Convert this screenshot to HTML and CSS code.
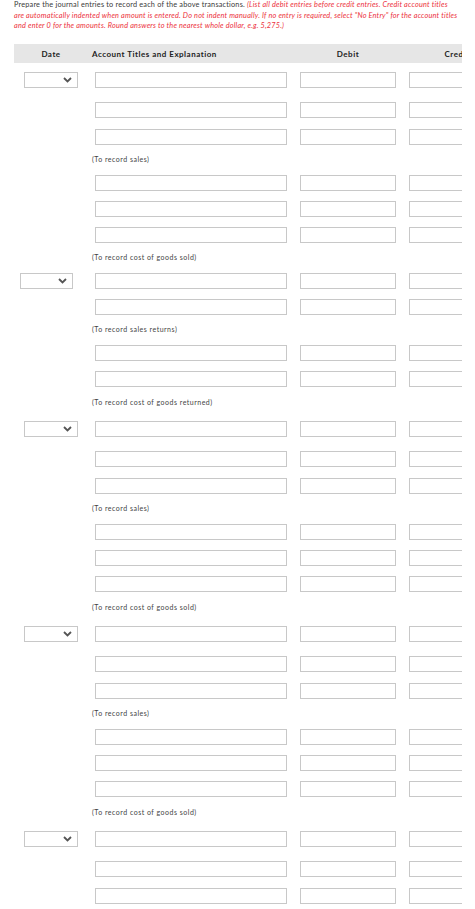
FILE: index.html
```html
<!DOCTYPE html>
<html>
<head>
<meta charset="utf-8">
<link rel="stylesheet" href="styles.css">
</head>
<body>
<div class="page">
  <p class="intro">Prepare the journal entries to record each of the above transactions. <em>(List all debit entries before credit entries. Credit account titles<br>are automatically indented when amount is entered. Do not indent manually. If no entry is required, select "No Entry" for the account titles<br>and enter 0 for the amounts. Round answers to the nearest whole dollar, e.g. 5,275.)</em></p>

  <div class="table">
    <div class="head">
      <div class="c-date">Date</div>
      <div class="c-acct">Account Titles and Explanation</div>
      <div class="c-num">Debit</div>
      <div class="c-num">Credit</div>
    </div>

    <!-- group 1 -->
    <div class="row first">
      <div class="c-date"><div class="dd"><svg width="9" height="6" viewBox="0 0 9 6"><polyline points="1,1 4.5,4.5 8,1" fill="none" stroke="#555" stroke-width="1.8"/></svg></div></div>
      <div class="c-acct"><input class="box" type="text"></div>
      <div class="c-num"><input class="box" type="text"></div>
      <div class="c-num"><input class="box" type="text"></div>
    </div>
    <div class="row after-dd">
      <div class="c-date"></div>
      <div class="c-acct"><input class="box" type="text"></div>
      <div class="c-num"><input class="box" type="text"></div>
      <div class="c-num"><input class="box" type="text"></div>
    </div>
    <div class="row third">
      <div class="c-date"></div>
      <div class="c-acct"><input class="box" type="text"></div>
      <div class="c-num"><input class="box" type="text"></div>
      <div class="c-num"><input class="box" type="text"></div>
    </div>
    <div class="note">(To record sales)</div>
    <div class="row plain">
      <div class="c-date"></div>
      <div class="c-acct"><input class="box" type="text"></div>
      <div class="c-num"><input class="box" type="text"></div>
      <div class="c-num"><input class="box" type="text"></div>
    </div>
    <div class="row">
      <div class="c-date"></div>
      <div class="c-acct"><input class="box" type="text"></div>
      <div class="c-num"><input class="box" type="text"></div>
      <div class="c-num"><input class="box" type="text"></div>
    </div>
    <div class="row">
      <div class="c-date"></div>
      <div class="c-acct"><input class="box" type="text"></div>
      <div class="c-num"><input class="box" type="text"></div>
      <div class="c-num"><input class="box" type="text"></div>
    </div>
    <div class="note">(To record cost of goods sold)</div>

    <!-- group 2 -->
    <div class="row plain">
      <div class="c-date"><div class="dd shift"><svg width="9" height="6" viewBox="0 0 9 6"><polyline points="1,1 4.5,4.5 8,1" fill="none" stroke="#555" stroke-width="1.8"/></svg></div></div>
      <div class="c-acct"><input class="box" type="text"></div>
      <div class="c-num"><input class="box" type="text"></div>
      <div class="c-num"><input class="box" type="text"></div>
    </div>
    <div class="row">
      <div class="c-date"></div>
      <div class="c-acct"><input class="box" type="text"></div>
      <div class="c-num"><input class="box" type="text"></div>
      <div class="c-num"><input class="box" type="text"></div>
    </div>
    <div class="note">(To record sales returns)</div>
    <div class="row plain">
      <div class="c-date"></div>
      <div class="c-acct"><input class="box" type="text"></div>
      <div class="c-num"><input class="box" type="text"></div>
      <div class="c-num"><input class="box" type="text"></div>
    </div>
    <div class="row">
      <div class="c-date"></div>
      <div class="c-acct"><input class="box" type="text"></div>
      <div class="c-num"><input class="box" type="text"></div>
      <div class="c-num"><input class="box" type="text"></div>
    </div>
    <div class="note tall">(To record cost of goods returned)</div>

    <!-- group 3 -->
    <div class="row plain">
      <div class="c-date"><div class="dd"><svg width="9" height="6" viewBox="0 0 9 6"><polyline points="1,1 4.5,4.5 8,1" fill="none" stroke="#555" stroke-width="1.8"/></svg></div></div>
      <div class="c-acct"><input class="box" type="text"></div>
      <div class="c-num"><input class="box" type="text"></div>
      <div class="c-num"><input class="box" type="text"></div>
    </div>
    <div class="row after-dd">
      <div class="c-date"></div>
      <div class="c-acct"><input class="box" type="text"></div>
      <div class="c-num"><input class="box" type="text"></div>
      <div class="c-num"><input class="box" type="text"></div>
    </div>
    <div class="row third">
      <div class="c-date"></div>
      <div class="c-acct"><input class="box" type="text"></div>
      <div class="c-num"><input class="box" type="text"></div>
      <div class="c-num"><input class="box" type="text"></div>
    </div>
    <div class="note">(To record sales)</div>
    <div class="row plain">
      <div class="c-date"></div>
      <div class="c-acct"><input class="box" type="text"></div>
      <div class="c-num"><input class="box" type="text"></div>
      <div class="c-num"><input class="box" type="text"></div>
    </div>
    <div class="row">
      <div class="c-date"></div>
      <div class="c-acct"><input class="box" type="text"></div>
      <div class="c-num"><input class="box" type="text"></div>
      <div class="c-num"><input class="box" type="text"></div>
    </div>
    <div class="row">
      <div class="c-date"></div>
      <div class="c-acct"><input class="box" type="text"></div>
      <div class="c-num"><input class="box" type="text"></div>
      <div class="c-num"><input class="box" type="text"></div>
    </div>
    <div class="note tall">(To record cost of goods sold)</div>

    <!-- group 4 -->
    <div class="row plain">
      <div class="c-date"><div class="dd"><svg width="9" height="6" viewBox="0 0 9 6"><polyline points="1,1 4.5,4.5 8,1" fill="none" stroke="#555" stroke-width="1.8"/></svg></div></div>
      <div class="c-acct"><input class="box" type="text"></div>
      <div class="c-num"><input class="box" type="text"></div>
      <div class="c-num"><input class="box" type="text"></div>
    </div>
    <div class="row after-dd">
      <div class="c-date"></div>
      <div class="c-acct"><input class="box" type="text"></div>
      <div class="c-num"><input class="box" type="text"></div>
      <div class="c-num"><input class="box" type="text"></div>
    </div>
    <div class="row third">
      <div class="c-date"></div>
      <div class="c-acct"><input class="box" type="text"></div>
      <div class="c-num"><input class="box" type="text"></div>
      <div class="c-num"><input class="box" type="text"></div>
    </div>
    <div class="note">(To record sales)</div>
    <div class="row plain">
      <div class="c-date"></div>
      <div class="c-acct"><input class="box" type="text"></div>
      <div class="c-num"><input class="box" type="text"></div>
      <div class="c-num"><input class="box" type="text"></div>
    </div>
    <div class="row">
      <div class="c-date"></div>
      <div class="c-acct"><input class="box" type="text"></div>
      <div class="c-num"><input class="box" type="text"></div>
      <div class="c-num"><input class="box" type="text"></div>
    </div>
    <div class="row">
      <div class="c-date"></div>
      <div class="c-acct"><input class="box" type="text"></div>
      <div class="c-num"><input class="box" type="text"></div>
      <div class="c-num"><input class="box" type="text"></div>
    </div>
    <div class="note tall">(To record cost of goods sold)</div>

    <!-- group 5 -->
    <div class="row plain">
      <div class="c-date"><div class="dd"><svg width="9" height="6" viewBox="0 0 9 6"><polyline points="1,1 4.5,4.5 8,1" fill="none" stroke="#555" stroke-width="1.8"/></svg></div></div>
      <div class="c-acct"><input class="box" type="text"></div>
      <div class="c-num"><input class="box" type="text"></div>
      <div class="c-num"><input class="box" type="text"></div>
    </div>
    <div class="row after-dd">
      <div class="c-date"></div>
      <div class="c-acct"><input class="box" type="text"></div>
      <div class="c-num"><input class="box" type="text"></div>
      <div class="c-num"><input class="box" type="text"></div>
    </div>
    <div class="row third">
      <div class="c-date"></div>
      <div class="c-acct"><input class="box" type="text"></div>
      <div class="c-num"><input class="box" type="text"></div>
      <div class="c-num"><input class="box" type="text"></div>
    </div>
  </div>
</div>
</body>
</html>
```

FILE: styles.css
```css
* { box-sizing: border-box; }

html, body {
  margin: 0;
  padding: 0;
  background: #ffffff;
}

.page {
  padding: 0 0 0 14px;
  font-family: Lato, "Open Sans", "Liberation Sans", sans-serif;
  color: #333333;
}

.intro {
  margin: 0;
  font-size: 7.3px;
  letter-spacing: 0.2px;
  line-height: 10.7px;
  white-space: nowrap;
  color: #3a3a3a;
}

.intro em {
  color: #ec2f3b;
  font-style: italic;
}

.table {
  width: 448px;
  overflow: hidden;
  margin-top: 12px;
}

.head {
  display: flex;
  height: 19px;
  align-items: center;
  background: #e6e6e6;
  font-size: 8px;
  letter-spacing: 0.5px;
  font-weight: 700;
  color: #222222;
}

.head .c-date {
  text-align: center;
  padding-right: 4px;
}

.head .c-num {
  text-align: center;
}

.row {
  display: flex;
  height: 16px;
  margin-top: 10px;
}

.row.first { margin-top: 9px; }
.row.after-dd { margin-top: 14px; }
.row.third { margin-top: 11px; }
.row.plain { margin-top: 0; }

.c-date {
  flex: 0 0 78px;
  width: 78px;
}

.c-acct {
  flex: 0 0 195px;
  width: 195px;
}

.c-num {
  flex: 0 0 96px;
  width: 96px;
  margin-left: 13px;
}

.row .c-acct {
  padding-left: 3px;
}

.box {
  display: block;
  width: 100%;
  height: 16px;
  margin: 0;
  padding: 0;
  border: 1px solid #c8c8c8;
  border-radius: 0;
  background: #ffffff;
  outline: none;
}

.dd {
  display: flex;
  align-items: center;
  justify-content: flex-end;
  width: 54px;
  height: 16px;
  margin-left: 10px;
  padding-right: 5px;
  border: 1px solid #c8c8c8;
  background: #ffffff;
}

.dd.shift {
  margin-left: 6px;
  width: 53px;
}

.note {
  height: 30px;
  padding-top: 9px;
  font-size: 7px;
  letter-spacing: 0.5px;
  line-height: 10px;
  color: #444444;
  padding-left: 78px;
}

.note.tall {
  height: 34px;
  padding-top: 10px;
}
```
